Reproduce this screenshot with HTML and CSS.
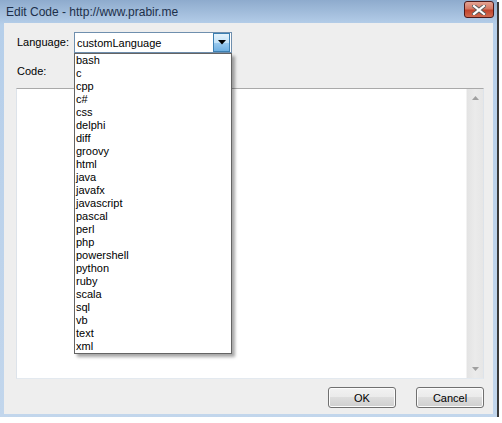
FILE: index.html
```html
<!DOCTYPE html>
<html lang="en">
<head>
    <meta charset="UTF-8">
    <title>Edit Code</title>
    <link rel="stylesheet" href="styles.css">
</head>
<body>
    <div class="window">
        <div class="titlebar">
            <span class="title">Edit Code - http://www.prabir.me</span>
            <button class="close">
                <svg width="14" height="10" viewBox="0 0 14 10">
                    <path d="M2 1 L12 9 M12 1 L2 9" stroke="#5a5a5a" stroke-width="4" stroke-linecap="square"/>
                    <path d="M2 1 L12 9 M12 1 L2 9" stroke="#fff" stroke-width="2.2" stroke-linecap="square"/>
                </svg>
            </button>
        </div>
        <div class="client">
            <div class="lang-row">
                <label class="label">Language:</label>
                <div class="combo">
                    <span class="combo-value">customLanguage</span>
                    <span class="combo-btn">
                        <svg width="8" height="5" viewBox="0 0 8 5"><path d="M0 0 H8 L4 4.5 Z" fill="#000"/></svg>
                    </span>
                    <!-- open drop-down list -->
                    <ul class="dropdown">
                        <li>bash</li>
                        <li>c</li>
                        <li>cpp</li>
                        <li>c#</li>
                        <li>css</li>
                        <li>delphi</li>
                        <li>diff</li>
                        <li>groovy</li>
                        <li>html</li>
                        <li>java</li>
                        <li>javafx</li>
                        <li>javascript</li>
                        <li>pascal</li>
                        <li>perl</li>
                        <li>php</li>
                        <li>powershell</li>
                        <li>python</li>
                        <li>ruby</li>
                        <li>scala</li>
                        <li>sql</li>
                        <li>vb</li>
                        <li>text</li>
                        <li>xml</li>
                    </ul>
                </div>
            </div>
            <div class="label code-label">Code:</div>
            <div class="code-box">
                <div class="code-text"></div>
                <div class="scrollbar">
                    <svg width="7" height="4" viewBox="0 0 7 4"><path d="M0 4 H7 L3.5 0 Z" fill="#a0a0a0"/></svg>
                    <svg width="7" height="4" viewBox="0 0 7 4"><path d="M0 0 H7 L3.5 4 Z" fill="#a0a0a0"/></svg>
                </div>
            </div>
            <div class="buttons">
                <button class="btn">OK</button>
                <button class="btn">Cancel</button>
            </div>
        </div>
    </div>
</body>
</html>
```

FILE: styles.css
```css
body {
    margin: 0;
    background: #fff;
    font-family: "Liberation Sans", Arial, sans-serif;
    font-size: 11px;
    color: #000;
}
.window {
    width: 497px;
    height: 417px;
    display: flex;
    flex-direction: column;
    background: linear-gradient(#8eabcd, #b6cfea 25px, #c2d6ec);
    box-shadow: 2px 2px 0 #3a3a3a;
}
.titlebar {
    height: 23px;
    display: flex;
    align-items: center;
    justify-content: space-between;
    padding: 0 3px 0 6px;
}
.title {
    font-size: 12px;
    color: #1c2f4a;
}
.close {
    width: 30px;
    height: 17px;
    margin-top: -4px;
    padding: 0;
    border: 1px solid #4e1a1a;
    border-radius: 3px;
    background: linear-gradient(#e4a494, #d37863 45%, #c1442c 55%, #d06a50);
    display: flex;
    align-items: center;
    justify-content: center;
}
.client {
    flex: 1;
    margin: 0 4px 3px 4px;
    background: #eeeeee;
    display: flex;
    flex-direction: column;
    padding: 9px 9px 6px 12px;
}
.lang-row {
    display: flex;
    align-items: center;
    height: 21px;
}
.label {
    margin-left: 1px;
    width: 57px;
    line-height: 13px;
}
.combo {
    position: relative;
    width: 156px;
    height: 19px;
    border: 1px solid #6f8fae;
    background: #fff;
    display: flex;
    align-items: center;
}
.combo-value {
    flex: 1;
    padding-left: 2px;
}
.combo-btn {
    width: 15px;
    height: 17px;
    margin-right: 1px;
    border: 1px solid #3c7fb1;
    background: linear-gradient(#e5f3fc, #c4e3f8 50%, #9ccbee 51%, #6fb0e2);
    display: flex;
    align-items: center;
    justify-content: center;
}
.dropdown {
    position: absolute;
    top: 20px;
    left: -1px;
    width: 156px;
    margin: 0;
    padding: 0;
    list-style: none;
    background: #fff;
    border: 1px solid #646464;
    box-shadow: 3px 3px 3px rgba(0, 0, 0, 0.35);
    z-index: 10;
}
.dropdown li {
    height: 13px;
    line-height: 13px;
    padding-left: 1px;
}
.code-label {
    margin-top: 12px;
    height: 13px;
}
.code-box {
    margin-top: 10px;
    height: 289px;
    display: flex;
    background: #fff;
    border: 1px solid #b3b3b3;
    border-color: #a9a9a9 #dde3ea #e3e9ef #dde3ea;
}
.code-text {
    flex: 1;
}
.scrollbar {
    width: 16px;
    background: linear-gradient(90deg, #e3e3e3, #ebebeb 50%, #e6e6e6);
    border-left: 1px solid #f2f2f2;
    display: flex;
    flex-direction: column;
    justify-content: space-between;
    align-items: center;
    padding: 7px 0 7px;
}
.buttons {
    margin-top: 8px;
    display: flex;
    justify-content: flex-end;
    gap: 20px;
}
.btn {
    width: 68px;
    height: 21px;
    padding: 0;
    font-family: "Liberation Sans", Arial, sans-serif;
    font-size: 11px;
    color: #000;
    border: 1px solid #707070;
    border-radius: 3px;
    background: linear-gradient(#f2f2f2, #ebebeb 45%, #dddddd 50%, #cfcfcf);
    box-shadow: inset 0 0 0 1px #fcfcfc;
}
```
